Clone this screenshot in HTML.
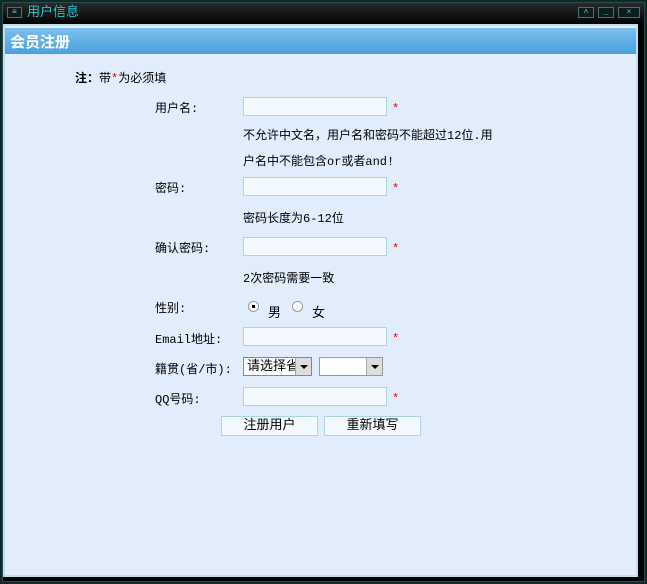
<!DOCTYPE html>
<html><head><meta charset="utf-8"><style>
*{margin:0;padding:0;box-sizing:border-box}
body{width:647px;height:584px;background:#0b2a2a;position:relative;overflow:hidden;font-family:"Liberation Mono","Noto Sans CJK SC",monospace;font-size:12px;color:#000}
.frame{position:absolute;left:2px;top:2px;width:643px;height:580px;background:#000;border:1px solid #2c4a4a}
.title{position:absolute;left:0;top:0;width:100%;height:22px;background:linear-gradient(#2a2a2a,#000)}
.tt{position:absolute;left:24px;top:0px;line-height:18px;color:#1ec8d8;font-size:13px;font-family:"Liberation Sans","Noto Sans CJK SC",sans-serif}
.ic{position:absolute;top:4px;height:11px;border:1px solid #4a7070;background:#0d1d1d;color:#5cc;font-size:8px;line-height:9px;text-align:center}
.panel{position:absolute;left:3px;top:24px;width:635px;height:553px;background:#e1edfb;border:2px solid #b8e0f0}
.hdr{position:absolute;left:0;top:2px;width:100%;height:26px;background:linear-gradient(#7cbfee,#4aa0dc);color:#fff;font-size:15px;font-weight:bold;padding:3px 0 0 5px;font-family:"Liberation Sans","Noto Sans CJK SC",sans-serif}
.a{position:absolute;white-space:nowrap}
.in{position:absolute;width:144px;height:19px;border:1px solid #a8d4e4;background:#f4f9ff}
.st{position:absolute;color:#e00;font-size:12px}
.btn{position:absolute;width:97px;height:20px;border:1px solid #a8d4e4;background:#f4f9ff;text-align:center;line-height:18px;font-size:13px}
.sel{position:absolute;height:19px;border:1px solid #888;background:#fff;font-size:13px;line-height:17px;padding-left:3px;overflow:hidden}
.arr{position:absolute;right:0;top:0;width:16px;height:17px;background:#ddd;border-left:1px solid #aaa}
.arr:after{content:"";position:absolute;left:4px;top:7px;border:4px solid transparent;border-top:4px solid #000}
.rad{position:absolute;width:11px;height:11px;border-radius:50%;background:#fff;border:1px solid #999}
</style></head><body>
<div class="frame">
<div class="title">
<div class="ic" style="left:4px;width:15px;color:#8cc">≡</div>
<div class="tt">用户信息</div>
<div class="ic" style="left:575px;width:16px">˄</div>
<div class="ic" style="left:595px;width:16px">_</div>
<div class="ic" style="left:615px;width:22px">×</div>
</div>
</div>
<div class="panel">
<div class="hdr">会员注册</div>
<div class="a" style="left:70px;top:43px"><b>注：</b>带<span style="color:#e00">*</span>为必须填</div>
<div class="a" style="left:150px;top:73px">用户名:</div>
<div class="in" style="left:238px;top:71px"></div><div class="st" style="left:387px;top:76px">*</div>
<div class="a" style="left:238px;top:100px">不允许中文名，用户名和密码不能超过12位.用</div>
<div class="a" style="left:238px;top:126px">户名中不能包含or或者and!</div>
<div class="a" style="left:150px;top:153px">密码:</div>
<div class="in" style="left:238px;top:151px"></div><div class="st" style="left:387px;top:156px">*</div>
<div class="a" style="left:238px;top:183px">密码长度为6-12位</div>
<div class="a" style="left:150px;top:213px">确认密码:</div>
<div class="in" style="left:238px;top:211px"></div><div class="st" style="left:387px;top:216px">*</div>
<div class="a" style="left:238px;top:243px">2次密码需要一致</div>
<div class="a" style="left:150px;top:273px">性别:</div>
<div class="rad" style="left:243px;top:275px"><div style="position:absolute;left:3px;top:3px;width:3px;height:3px;background:#000"></div></div>
<div class="a" style="left:263px;top:276px;font-size:13px">男</div>
<div class="rad" style="left:287px;top:275px"></div>
<div class="a" style="left:307px;top:276px;font-size:13px">女</div>
<div class="a" style="left:150px;top:304px">Email地址:</div>
<div class="in" style="left:238px;top:301px"></div><div class="st" style="left:387px;top:306px">*</div>
<div class="a" style="left:150px;top:334px">籍贯(省/市):</div>
<div class="sel" style="left:238px;top:331px;width:69px">请选择省<div class="arr"></div></div>
<div class="sel" style="left:314px;top:331px;width:64px;border-color:#999"><div class="arr"></div></div>
<div class="a" style="left:150px;top:364px">QQ号码:</div>
<div class="in" style="left:238px;top:361px"></div><div class="st" style="left:387px;top:366px">*</div>
<div class="btn" style="left:216px;top:390px">注册用户</div>
<div class="btn" style="left:319px;top:390px">重新填写</div>
</div>
</body></html>
